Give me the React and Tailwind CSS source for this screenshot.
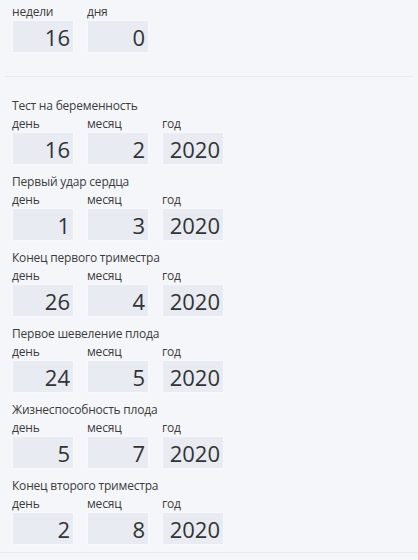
const sections = [
    { title: "Тест на беременность", d: 16, m: 2, y: 2020 },
    { title: "Первый удар сердца", d: 1, m: 3, y: 2020 },
    { title: "Конец первого триместра", d: 26, m: 4, y: 2020 },
    { title: "Первое шевеление плода", d: 24, m: 5, y: 2020 },
    { title: "Жизнеспособность плода", d: 5, m: 7, y: 2020 },
    { title: "Конец второго триместра", d: 2, m: 8, y: 2020 },
];

function Field({ label, value }) {
    return (
        <div className="w-[62px]">
            <div className="h-[17px] text-[12px] leading-[17px] tracking-[-0.2px] text-[#3c3c3c]">{label}</div>
            <div className="h-[33px] bg-[#e8ebf1] border border-[#f7f8fb] text-right pr-[3px] text-[22px] leading-[33px] text-[#333]">
                {value}
            </div>
        </div>
    );
}

export default function App() {
    return (
        <div className="w-[418px] h-[560px] overflow-hidden bg-[#f5f6fa]" style={{ fontFamily: '"Open Sans", "Noto Sans", sans-serif' }}>
            <div className="pl-3 pt-[3px] flex gap-[13px]">
                <Field label="недели" value={16} />
                <Field label="дня" value={0} />
            </div>
            <div className="mt-[23px] mx-[5px] h-px bg-[#e7e9ef]" />

            <div className="pl-3 pt-[19px]">
                {sections.map((s) => (
                    <div key={s.title} className="mb-[7px]">
                        <div className="h-[19px] text-[12px] leading-[19px] tracking-[-0.2px] text-[#3c3c3c]">{s.title}</div>
                        <div className="flex gap-[13px]">
                            <Field label="день" value={s.d} />
                            <Field label="месяц" value={s.m} />
                            <Field label="год" value={s.y} />
                        </div>
                    </div>
                ))}
            </div>
            <div className="mt-[4px] h-px bg-[#e7e9ef]" />
        </div>
    );
}
